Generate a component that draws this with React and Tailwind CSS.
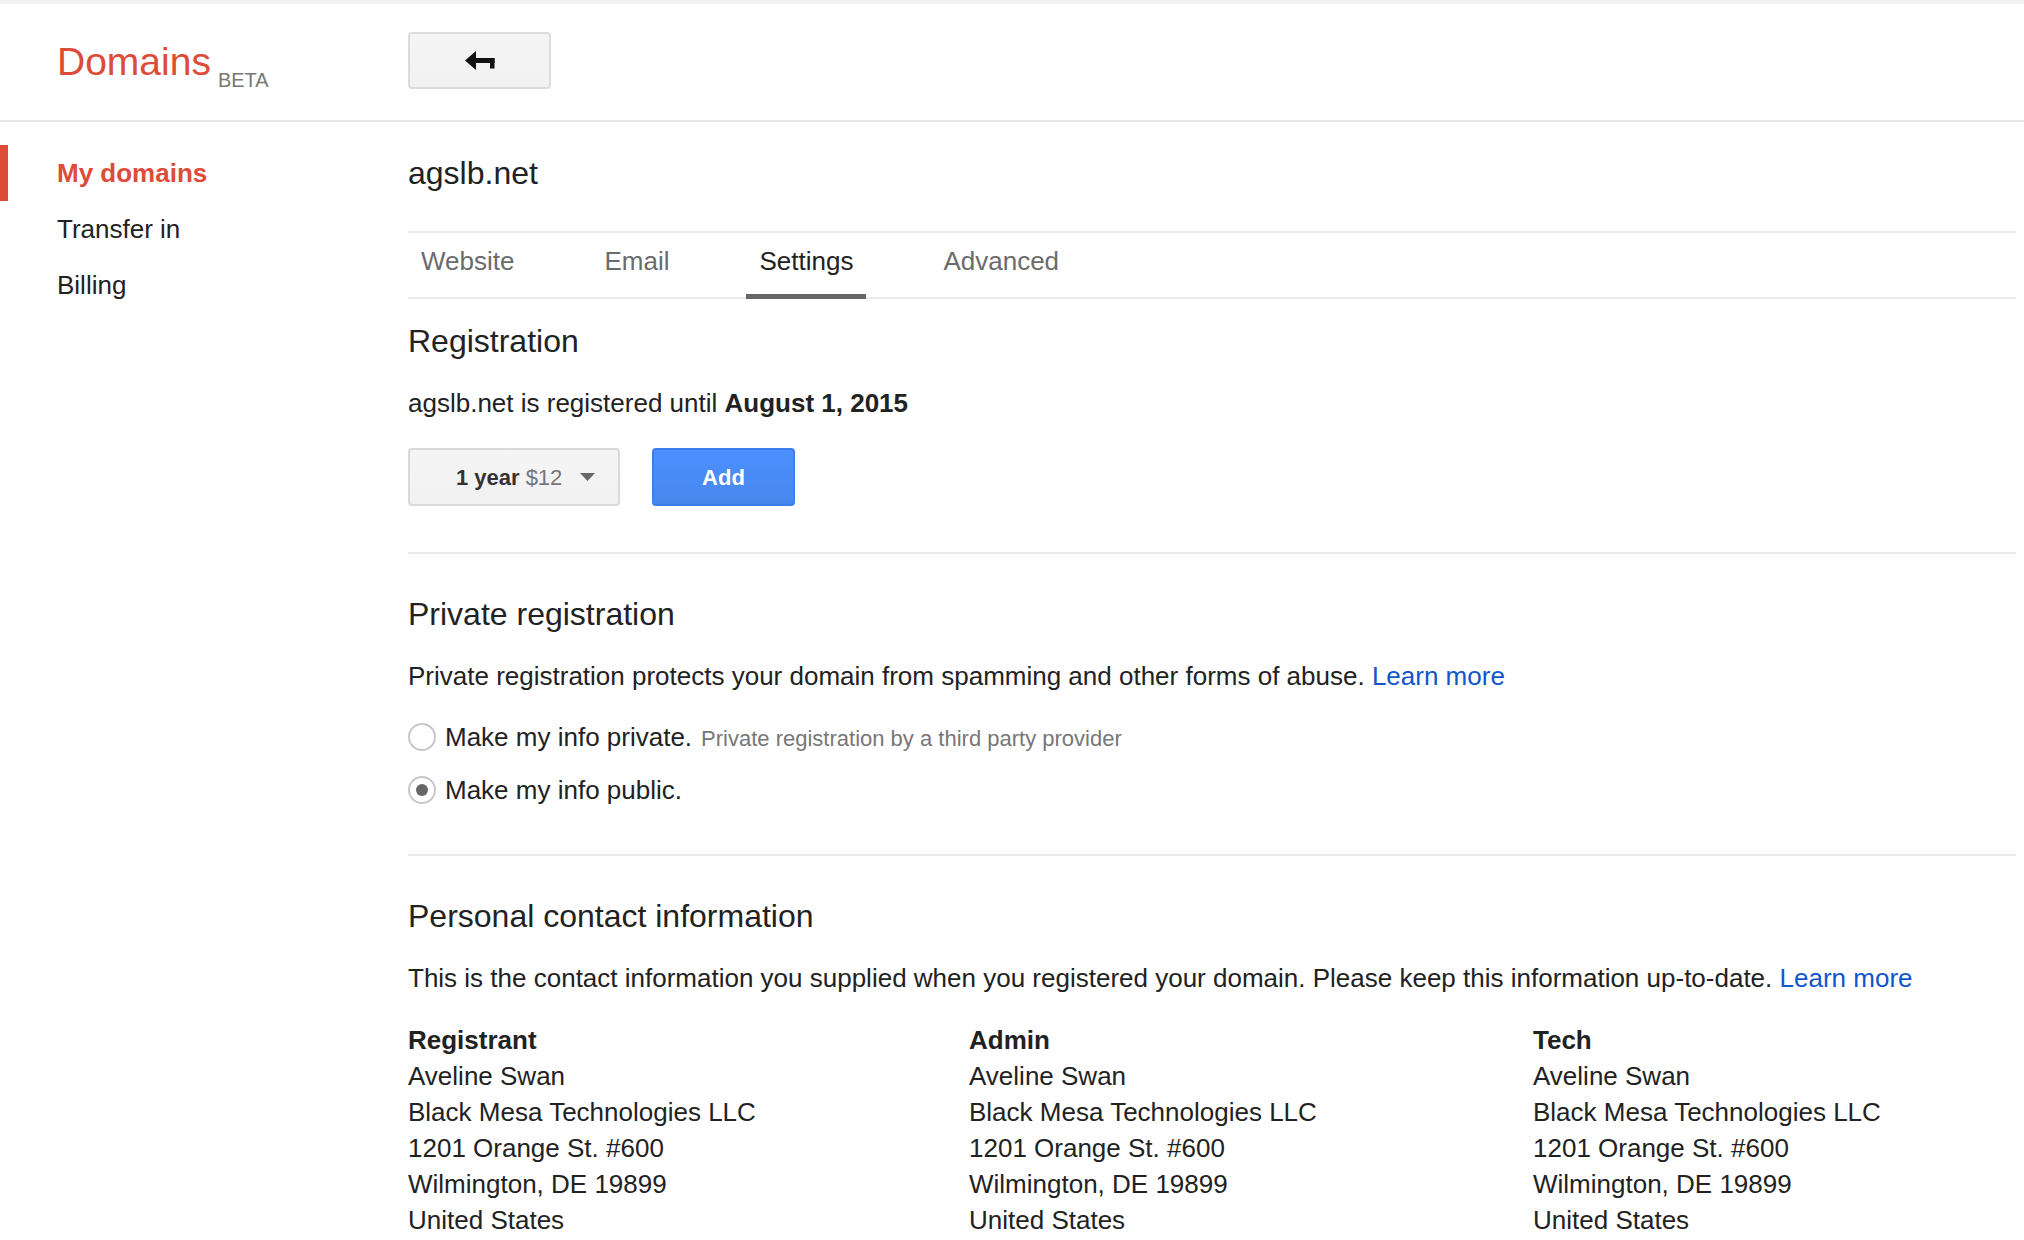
import React from 'react';

const contacts = [
    { role: 'Registrant', col: 'w-[561px]' },
    { role: 'Admin', col: 'w-[564px]' },
    { role: 'Tech', col: 'flex-1' },
];

const address = [
    'Aveline Swan',
    'Black Mesa Technologies LLC',
    '1201 Orange St. #600',
    'Wilmington, DE 19899',
    'United States',
];

const tabs = ['Website', 'Email', 'Settings', 'Advanced'];

const BackArrow = () => (
    <svg width="30" height="19" viewBox="0 0 30 19" fill="#111">
        <polygon points="0,9.5 11,0 11,19" />
        <rect x="10" y="7" width="19.5" height="5" />
        <rect x="25" y="7" width="4.5" height="10.5" />
    </svg>
);

const Radio = ({ checked }) => (
    <span className="w-[28px] h-[28px] rounded-full border-2 border-[#c8c8c8] bg-white flex items-center justify-center shrink-0">
        {checked && <span className="w-[12px] h-[12px] rounded-full bg-[#666]" />}
    </span>
);

const App = () => {
    return (
        <div className="min-h-[1240px] bg-white text-[#222] font-['Liberation_Sans',Arial,sans-serif]">
            <div className="h-[4px] bg-[#f1f1f1]" />

            {/* top bar */}
            <header className="h-[118px] border-b-2 border-[#e5e5e5] flex">
                <div className="w-[408px] pl-[57px] pt-[38px] flex items-start">
                    <span className="text-[39px] leading-[40px] text-[#dd4b39]">Domains</span>
                    <span className="ml-[7px] mt-[28px] text-[20px] leading-[20px] text-[#777]">BETA</span>
                </div>
                <button className="mt-[28px] w-[143px] h-[57px] rounded-[4px] border-2 border-[#dcdcdc] bg-gradient-to-b from-[#f5f5f5] to-[#f1f1f1] flex items-center justify-center">
                    <BackArrow />
                </button>
            </header>

            <div className="flex">
                {/* side nav */}
                <nav className="w-[408px] pt-[23px] text-[26px]">
                    <div className="h-[56px] flex items-center border-l-[8px] border-[#dd4b39] pl-[49px] font-bold text-[#dd4b39]">
                        My domains
                    </div>
                    <div className="h-[56px] flex items-center pl-[57px]">Transfer in</div>
                    <div className="h-[56px] flex items-center pl-[57px]">Billing</div>
                </nav>

                <main className="flex-1 pr-[8px]">
                    <h1 className="pt-[31px] pb-[38px] text-[32px] leading-[40px] border-b-2 border-[#ebebeb]">agslb.net</h1>

                    <div className="flex gap-[64px] border-b-2 border-[#ebebeb] text-[26px] leading-[30px]">
                        {tabs.map((t) =>
                            t === 'Settings' ? (
                                <div key={t} className="h-[66px] -mb-[2px] px-[13px] pt-[13px] border-b-[5px] border-[#666] text-[#222]">
                                    {t}
                                </div>
                            ) : (
                                <div key={t} className="h-[64px] px-[13px] pt-[13px] text-[#6b6b6b]">
                                    {t}
                                </div>
                            )
                        )}
                    </div>

                    {/* registration */}
                    <section className="pt-[22px] pb-[46px] border-b-2 border-[#ebebeb]">
                        <h2 className="text-[32px] leading-[40px]">Registration</h2>
                        <p className="mt-[24px] text-[26px] leading-[36px]">
                            agslb.net is registered until <b>August 1, 2015</b>
                        </p>
                        <div className="mt-[27px] flex gap-[32px]">
                            <button className="w-[212px] h-[58px] rounded-[4px] border-2 border-[#d9d9d9] bg-gradient-to-b from-[#f5f5f5] to-[#f1f1f1] flex items-center pl-[46px] text-[22px]">
                                <span className="font-bold text-[#333]">1 year</span>
                                <span className="ml-[6px] text-[#777]">$12</span>
                                <svg className="ml-[18px]" width="15" height="8" viewBox="0 0 15 8">
                                    <polygon points="0,0 15,0 7.5,8" fill="#666" />
                                </svg>
                            </button>
                            <button className="w-[143px] h-[58px] rounded-[4px] border-2 border-[#3c7eea] bg-gradient-to-b from-[#4d90fe] to-[#4787ed] text-white font-bold text-[22px]">
                                Add
                            </button>
                        </div>
                    </section>

                    {/* privacy */}
                    <section className="pt-[40px] pb-[46px] border-b-2 border-[#ebebeb]">
                        <h2 className="text-[32px] leading-[40px]">Private registration</h2>
                        <p className="mt-[24px] text-[26px] leading-[36px]">
                            Private registration protects your domain from spamming and other forms of abuse.{' '}
                            <a className="text-[#1155cc]">Learn more</a>
                        </p>
                        <label className="mt-[25px] h-[36px] flex items-center gap-[9px] text-[26px]">
                            <Radio />
                            <span>Make my info private.</span>
                            <span className="text-[22px] text-[#777] pt-[2px]">Private registration by a third party provider</span>
                        </label>
                        <label className="mt-[17px] h-[36px] flex items-center gap-[9px] text-[26px]">
                            <Radio checked />
                            <span>Make my info public.</span>
                        </label>
                    </section>

                    {/* contacts */}
                    <section className="pt-[40px]">
                        <h2 className="text-[32px] leading-[40px]">Personal contact information</h2>
                        <p className="mt-[24px] text-[26px] leading-[36px]">
                            This is the contact information you supplied when you registered your domain. Please keep this information up-to-date.{' '}
                            <a className="text-[#1155cc]">Learn more</a>
                        </p>
                        <div className="mt-[26px] flex text-[26px] leading-[36px]">
                            {contacts.map((c) => (
                                <div key={c.role} className={c.col}>
                                    <div className="font-bold">{c.role}</div>
                                    {address.map((line) => (
                                        <div key={line}>{line}</div>
                                    ))}
                                </div>
                            ))}
                        </div>
                    </section>
                </main>
            </div>
        </div>
    );
};

export default App;
